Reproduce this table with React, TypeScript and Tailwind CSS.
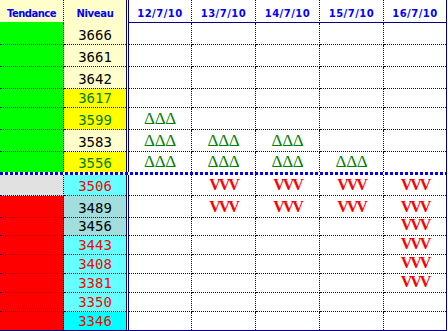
import React from "react";

type Mark = "" | "up" | "down";

type Row = {
  h: string;
  trend: string;
  level: string;
  levelBg: string;
  levelColor: string;
  marks: Mark[];
  noBorder?: boolean;
};

const dates = ["12/7/10", "13/7/10", "14/7/10", "15/7/10", "16/7/10"];
const dateW = ["w-[63px]", "w-[64px]", "w-[64px]", "w-[64px]", "w-[62px]"];

const GREEN = "bg-[#00ff00]";
const RED = "bg-[#ff0000]";

const top: Row[] = [
  { h: "h-[22px]", trend: GREEN, level: "3666", levelBg: "bg-[#ffffcc]", levelColor: "text-black", marks: ["", "", "", "", ""] },
  { h: "h-[22px]", trend: GREEN, level: "3661", levelBg: "bg-[#ffffcc]", levelColor: "text-black", marks: ["", "", "", "", ""] },
  { h: "h-[22px]", trend: GREEN, level: "3642", levelBg: "bg-[#ffffcc]", levelColor: "text-black", marks: ["", "", "", "", ""] },
  { h: "h-[19px]", trend: GREEN, level: "3617", levelBg: "bg-[#ffff00]", levelColor: "text-[#008000]", marks: ["", "", "", "", ""] },
  { h: "h-[22px]", trend: GREEN, level: "3599", levelBg: "bg-[#ffff00]", levelColor: "text-[#008000]", marks: ["up", "", "", "", ""] },
  { h: "h-[22px]", trend: GREEN, level: "3583", levelBg: "bg-[#ffffcc]", levelColor: "text-black", marks: ["up", "up", "up", "", ""] },
  { h: "h-[20px]", trend: GREEN, level: "3556", levelBg: "bg-[#ffff00]", levelColor: "text-[#008000]", marks: ["up", "up", "up", "up", ""], noBorder: true },
];

const bottom: Row[] = [
  { h: "h-[21px]", trend: "bg-[#e1e1e1]", level: "3506", levelBg: "bg-[#66ffff]", levelColor: "text-[#ff0000]", marks: ["", "down", "down", "down", "down"] },
  { h: "h-[22px]", trend: RED, level: "3489", levelBg: "bg-[#a3dede]", levelColor: "text-black", marks: ["", "down", "down", "down", "down"] },
  { h: "h-[18px]", trend: RED, level: "3456", levelBg: "bg-[#a3dede]", levelColor: "text-black", marks: ["", "", "", "", "down"] },
  { h: "h-[19px]", trend: RED, level: "3443", levelBg: "bg-[#66ffff]", levelColor: "text-[#ff0000]", marks: ["", "", "", "", "down"] },
  { h: "h-[19px]", trend: RED, level: "3408", levelBg: "bg-[#66ffff]", levelColor: "text-[#ff0000]", marks: ["", "", "", "", "down"] },
  { h: "h-[19px]", trend: RED, level: "3381", levelBg: "bg-[#66ffff]", levelColor: "text-[#ff0000]", marks: ["", "", "", "", "down"] },
  { h: "h-[19px]", trend: RED, level: "3350", levelBg: "bg-[#66ffff]", levelColor: "text-[#ff0000]", marks: ["", "", "", "", ""] },
  { h: "h-[18px]", trend: RED, level: "3346", levelBg: "bg-[#00ffff]", levelColor: "text-[#ff0000]", marks: ["", "", "", "", ""], noBorder: true },
];

function MarkText({ mark }: { mark: Mark }) {
  if (mark === "up")
    return (
      <span className="[font-family:'Liberation_Serif',serif] text-[17px] leading-[18px] tracking-[-0.3px] text-[#008000]">
        ΔΔΔ
      </span>
    );
  if (mark === "down")
    return (
      <span className="[font-family:'Liberation_Serif',serif] text-[16px] font-bold leading-[18px] tracking-[-2px] text-[#ff0000]">
        VVV
      </span>
    );
  return null;
}

function DataRow({ row }: { row: Row }) {
  const bb = row.noBorder ? "" : "border-b";
  return (
    <div className={`flex ${row.h}`}>
      <div className={`w-[64px] ${row.trend} border-r ${bb} border-dotted border-[#000080]`} />
      <div
        className={`flex w-[62px] items-end justify-center pb-px ${row.levelBg} ${bb} border-dotted border-[#000080] [font-family:'DejaVu_Sans_Mono',monospace] text-[14px] leading-[16px] ${row.levelColor}`}
      >
        {row.level}
      </div>
      <div className="w-[3px] border-x border-[#000080] bg-white" />
      {row.marks.map((m, i) => (
        <div
          key={i}
          className={`flex ${dateW[i]} items-end justify-center pb-px ${i < 4 ? "border-r" : ""} ${bb} border-dotted border-[#000080] bg-white`}
        >
          <MarkText mark={m} />
        </div>
      ))}
    </div>
  );
}

export default function App() {
  const head = "[font-family:'DejaVu_Sans',sans-serif] text-[10px] font-bold leading-[12px] text-[#0000ff]";
  return (
    <div className="min-h-screen bg-white">
      <div className="w-[447px] border-r border-b border-[#000080] bg-white">
        <div className="flex h-[23px]">
          <div
            className={`flex w-[64px] items-end justify-center pb-[3px] bg-[#ffffcc] shadow-[inset_0_-1px_0_#00ff00] border-r border-dotted border-[#000080] ${head} tracking-[-0.5px]`}
          >
            Tendance
          </div>
          <div className={`flex w-[62px] items-end justify-center pb-[3px] bg-[#ffffcc] ${head} tracking-[-0.3px]`}>
            Niveau
          </div>
          <div className="w-[3px] border-x border-[#000080] bg-white" />
          {dates.map((d, i) => (
            <div
              key={d}
              className={`flex ${dateW[i]} items-end justify-center pb-[3px] shadow-[inset_0_-1px_0_#000080] ${i < 4 ? "border-r border-dotted border-[#000080]" : ""} ${head} tracking-[0.5px]`}
            >
              {d}
            </div>
          ))}
        </div>
        {top.map((r) => (
          <DataRow key={r.level} row={r} />
        ))}
        <div className="h-[3px] w-full bg-[repeating-linear-gradient(90deg,#0000ff_0px,#0000ff_3px,#ffffff_3px,#ffffff_5px)]" />
        {bottom.map((r) => (
          <DataRow key={r.level} row={r} />
        ))}
      </div>
    </div>
  );
}
